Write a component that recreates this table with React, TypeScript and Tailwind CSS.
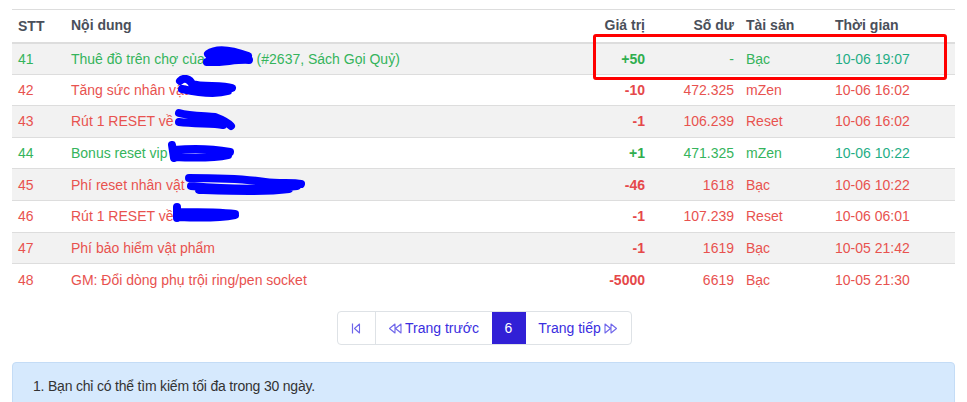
import React from "react"

type Tone = "green" | "red"

type Row = {
  stt: number
  text: string
  after?: string
  scribble?: { w: number; h: number; d: string; dx: number; dy: number }
  value: string
  balance: string
  asset: string
  time: string
  tone: Tone
}

const rows: Row[] = [
  {
    stt: 41,
    text: "Thuê đồ trên chợ của",
    after: " (#2637, Sách Gọi Quỷ)",
    scribble: { w: 52, h: 24, d: "M6 8 C14 2 30 4 46 10 M5 16 C20 17 34 13 47 14 M8 12 L44 12", dx: -3, dy: -3 },
    value: "+50",
    balance: "-",
    asset: "Bạc",
    time: "10-06 19:07",
    tone: "green",
  },
  {
    stt: 42,
    text: "Tăng sức nhân vật",
    scribble: { w: 66, h: 24, d: "M8 6 C12 2 18 4 20 9 C30 12 50 10 60 13 M10 14 C28 18 46 19 56 16", dx: -16, dy: -5 },
    value: "-10",
    balance: "472.325",
    asset: "mZen",
    time: "10-06 16:02",
    tone: "red",
  },
  {
    stt: 43,
    text: "Rút 1 RESET về",
    scribble: { w: 64, h: 26, d: "M6 5 C16 8 32 8 42 9 C50 12 54 14 58 18 M6 14 C22 16 40 15 50 17", dx: 0, dy: -3 },
    value: "-1",
    balance: "106.239",
    asset: "Reset",
    time: "10-06 16:02",
    tone: "red",
  },
  {
    stt: 44,
    text: "Bonus reset vip",
    scribble: { w: 70, h: 24, d: "M6 5 L8 18 M8 10 C28 8 48 9 64 12 M8 17 C30 18 48 18 62 15", dx: -2, dy: -3 },
    value: "+1",
    balance: "471.325",
    asset: "mZen",
    time: "10-06 10:22",
    tone: "green",
  },
  {
    stt: 45,
    text: "Phí reset nhân vật",
    scribble: { w: 122, h: 24, d: "M4 6 C30 6 60 7 80 10 C95 12 108 10 116 12 M6 14 C40 17 80 18 112 14 M14 18 C50 19 80 20 104 17", dx: 0, dy: -3 },
    value: "-46",
    balance: "1618",
    asset: "Bạc",
    time: "10-06 10:22",
    tone: "red",
  },
  {
    stt: 46,
    text: "Rút 1 RESET về",
    scribble: { w: 70, h: 22, d: "M6 5 L6 16 M8 10 C28 10 48 10 64 12 M8 15 C30 16 48 16 64 13", dx: -2, dy: -4 },
    value: "-1",
    balance: "107.239",
    asset: "Reset",
    time: "10-06 06:01",
    tone: "red",
  },
  { stt: 47, text: "Phí bảo hiểm vật phẩm", value: "-1", balance: "1619", asset: "Bạc", time: "10-05 21:42", tone: "red" },
  { stt: 48, text: "GM: Đổi dòng phụ trội ring/pen socket", value: "-5000", balance: "6619", asset: "Bạc", time: "10-05 21:30", tone: "red" },
]

const Scribble = ({ s }: { s: NonNullable<Row["scribble"]> }) => (
  <span className="relative inline-block w-0 h-0 align-top">
    <svg
      width={s.w}
      height={s.h}
      viewBox={`0 0 ${s.w} ${s.h}`}
      className="absolute"
      style={{ left: s.dx, top: s.dy }}
      aria-hidden="true"
    >
      <path d={s.d} fill="none" stroke="#0000ff" strokeWidth="8" strokeLinecap="round" strokeLinejoin="round" />
    </svg>
  </span>
)

const FirstIcon = () => (
  <svg width="10" height="11" viewBox="0 0 10 11" aria-hidden="true">
    <path d="M1.5 0.5 V10.5" stroke="currentColor" strokeWidth="1.2" />
    <path d="M8.5 1 L3.5 5.5 L8.5 10 Z" fill="none" stroke="currentColor" strokeWidth="1.1" strokeLinejoin="round" />
  </svg>
)

const PrevIcon = () => (
  <svg width="14" height="11" viewBox="0 0 14 11" aria-hidden="true">
    <path d="M7 1 L1.5 5.5 L7 10 Z M13 1 L7.5 5.5 L13 10 Z" fill="none" stroke="currentColor" strokeWidth="1.1" strokeLinejoin="round" />
  </svg>
)

const NextIcon = () => (
  <svg width="14" height="11" viewBox="0 0 14 11" aria-hidden="true">
    <path d="M1 1 L6.5 5.5 L1 10 Z M7 1 L12.5 5.5 L7 10 Z" fill="none" stroke="currentColor" strokeWidth="1.1" strokeLinejoin="round" />
  </svg>
)

export default function App() {
  const cell = "h-[31.6px] px-[6px] py-0 border-t border-[#dddddd] leading-5 whitespace-nowrap"
  const head = "px-[6px] border-t border-b-2 border-[#dddddd]"
  return (
    <div className="min-h-[402px] bg-white pt-[9px] px-[12px] text-[14px] text-[#333] font-['Liberation_Sans',Arial,sans-serif]">
      <div className="relative w-[943px]">
        <table className="w-full border-collapse table-fixed">
          <colgroup>
            <col className="w-[53px]" />
            <col />
            <col className="w-[80px]" />
            <col className="w-[89px]" />
            <col className="w-[89px]" />
            <col className="w-[126px]" />
          </colgroup>
          <thead>
            <tr className="text-[#4a4f5a] font-bold">
              <th className={`${head} h-[33px] pt-[1px] text-left`}>STT</th>
              <th className={`${head} text-left`}>Nội dung</th>
              <th className={`${head} text-right`}>Giá trị</th>
              <th className={`${head} text-right`}>Số dư</th>
              <th className={`${head} text-left`}>Tài sản</th>
              <th className={`${head} text-left`}>Thời gian</th>
            </tr>
          </thead>
          <tbody>
            {rows.map((r, i) => {
              const green = r.tone === "green"
              const txt = green ? "text-[#35b45c]" : "text-[#e8524f]"
              return (
                <tr key={r.stt} className={i % 2 === 0 ? "bg-[#f2f2f2]" : "bg-white"}>
                  <td className={`${cell} ${txt}`}>{r.stt}</td>
                  <td className={`${cell} ${txt} overflow-visible`}>
                    {r.text}
                    {r.scribble && <Scribble s={r.scribble} />}
                    {r.after && <span className="ml-[48px]">{r.after}</span>}
                  </td>
                  <td className={`${cell} text-right font-bold ${green ? "text-[#2fae4e]" : "text-[#e5484a]"}`}>{r.value}</td>
                  <td className={`${cell} text-right ${txt}`}>{r.balance}</td>
                  <td className={`${cell} ${txt}`}>{r.asset}</td>
                  <td className={`${cell} ${green ? "text-[#1fae86]" : "text-[#e8524f]"}`}>{r.time}</td>
                </tr>
              )
            })}
          </tbody>
        </table>
        <div className="absolute left-[581px] top-[25px] w-[354px] h-[46px] border-[3px] border-[#ff0000] rounded-[3px] pointer-events-none" />
      </div>

      <div className="flex justify-center mt-[16px] pl-[1px]">
        <div className="flex h-[34px] border border-[#dee2e6] rounded-[4px] overflow-hidden text-[#3a2ee0] text-[14px]">
          <div className="w-[38px] flex items-center justify-center border-r border-[#dee2e6] text-[#6f66ea]">
            <FirstIcon />
          </div>
          <div className="w-[116px] flex items-center justify-center gap-[3px]">
            <span className="text-[#6f66ea] flex"><PrevIcon /></span>
            <span>Trang trước</span>
          </div>
          <div className="w-[34px] flex items-center justify-center bg-[#3120d6] text-white">6</div>
          <div className="w-[105px] flex items-center justify-center gap-[3px]">
            <span>Trang tiếp</span>
            <span className="text-[#6f66ea] flex"><NextIcon /></span>
          </div>
        </div>
      </div>

      <div className="mt-[17px] w-[943px] h-[60px] bg-[#d6e9fd] border border-[#c4dcf6] rounded-[4px] px-[20px] pt-[13px] text-[14px] text-[#333] tracking-[-0.2px]">
        1. Bạn chỉ có thể tìm kiếm tối đa trong 30 ngày.
      </div>
    </div>
  )
}
